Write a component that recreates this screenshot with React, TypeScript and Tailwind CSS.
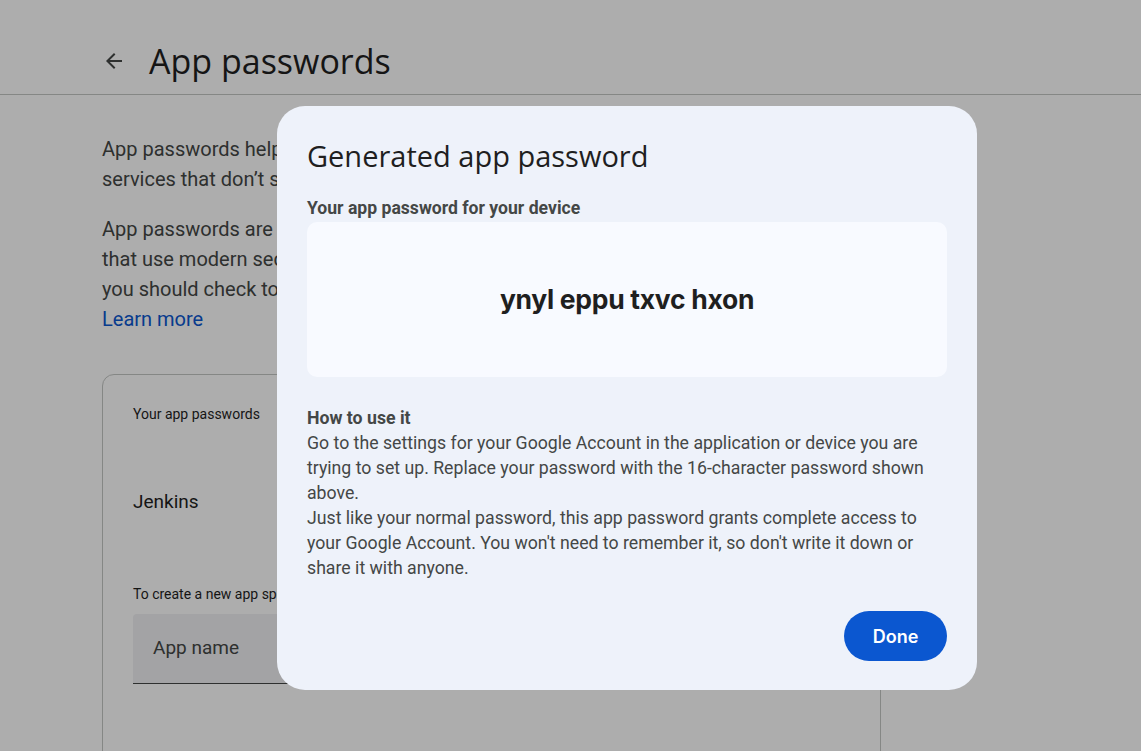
import React from 'react';

const sans = "font-['Open_Sans',sans-serif]";
const body = "font-['Roboto',sans-serif]";

function ArrowLeft() {
  return (
    <svg width="24" height="24" viewBox="0 0 24 24" className="text-[#444746]">
      <path d="M20 11H7.83l5.59-5.59L12 4l-8 8 8 8 1.41-1.41L7.83 13H20v-2z" fill="currentColor" />
    </svg>
  );
}

export default function App() {
  return (
    <div className="relative w-[1141px] h-[751px] overflow-hidden bg-white">
      {/* page behind the dialog */}
      <div className="flex flex-col">
        <div className="h-[95px] border-b border-[#c4c7c5] flex items-center pl-[102px] pt-[28px] gap-[23px]">
          <ArrowLeft />
          <h1 className={`${sans} text-[34px] text-[#1f1f1f] leading-none`}>App passwords</h1>
        </div>

        <div className="pl-[102px] w-[881px] pt-[39px]">
          <p className={`${body} text-[20px] leading-[30px] text-[#444746] whitespace-nowrap`}>
            App passwords help you sign in to your Google Account on older apps and
            <br />
            services that don’t support modern security standards.
          </p>
          <p className={`${body} text-[20px] leading-[30px] text-[#444746] mt-[20px] whitespace-nowrap`}>
            App passwords are less secure than using up-to-date apps and services
            <br />
            that use modern security standards. Before you create an app password,
            <br />
            you should check to see if your app needs this in order to sign in.
          </p>
          <a className={`${body} text-[20px] leading-[30px] text-[#0b57d0]`}>Learn more</a>

          <div className="mt-[40px] border border-[#c4c7c5] rounded-[12px] h-[420px] pl-[30px] pt-[29px]">
            <div className={`${body} text-[14px] text-[#1f1f1f]`}>Your app passwords</div>
            <div className={`${body} text-[19px] text-[#1f1f1f] mt-[63px]`}>Jenkins</div>
            <div className={`${body} text-[14px] text-[#1f1f1f] mt-[67px]`}>To create a new app specific password, type a name for it below...</div>
            <div className="mt-[9px] w-[500px] h-[70px] bg-[#f0f1f3] border-b border-[#444746] rounded-t-[4px] flex items-center pl-[20px]">
              <span className={`${body} text-[19px] text-[#444746]`}>App name</span>
            </div>
          </div>
        </div>
      </div>

      {/* scrim */}
      <div className="absolute inset-0 bg-black/[0.32]" />

      {/* dialog */}
      <div className="absolute left-[277px] top-[106px] w-[700px] h-[584px] bg-[#eef2fa] rounded-[28px] px-[30px] pt-[33px] flex flex-col">
        <h2 className={`${sans} text-[29px] leading-[34px] text-[#1f1f1f]`}>Generated app password</h2>
        <div className={`${body} font-bold text-[17.6px] text-[#444746] mt-[24px] leading-[22px]`}>Your app password for your device</div>
        <div className="mt-[3px] h-[155px] bg-[#f8faff] rounded-[10px] flex items-center justify-center">
          <span className="font-['Inter',sans-serif] font-bold text-[26.5px] tracking-[-0.3px] text-[#1f1f1f]">ynyl eppu txvc hxon</span>
        </div>
        <div className={`${body} text-[17.7px] leading-[25px] text-[#444746] mt-[29px] w-[636px]`}>
          <div className="font-bold">How to use it</div>
          <p>
            Go to the settings for your Google Account in the application or device you are trying to set up. Replace your password with the 16-character password shown above.
          </p>
          <p>
            Just like your normal password, this app password grants complete access to your Google Account. You won't need to remember it, so don't write it down or share it with anyone.
          </p>
        </div>
        <div className="flex justify-end mt-[30px]">
          <button className="w-[103px] h-[50px] rounded-full bg-[#0b57d0] text-white font-['Inter',sans-serif] font-semibold text-[18px]">
            Done
          </button>
        </div>
      </div>
    </div>
  );
}
